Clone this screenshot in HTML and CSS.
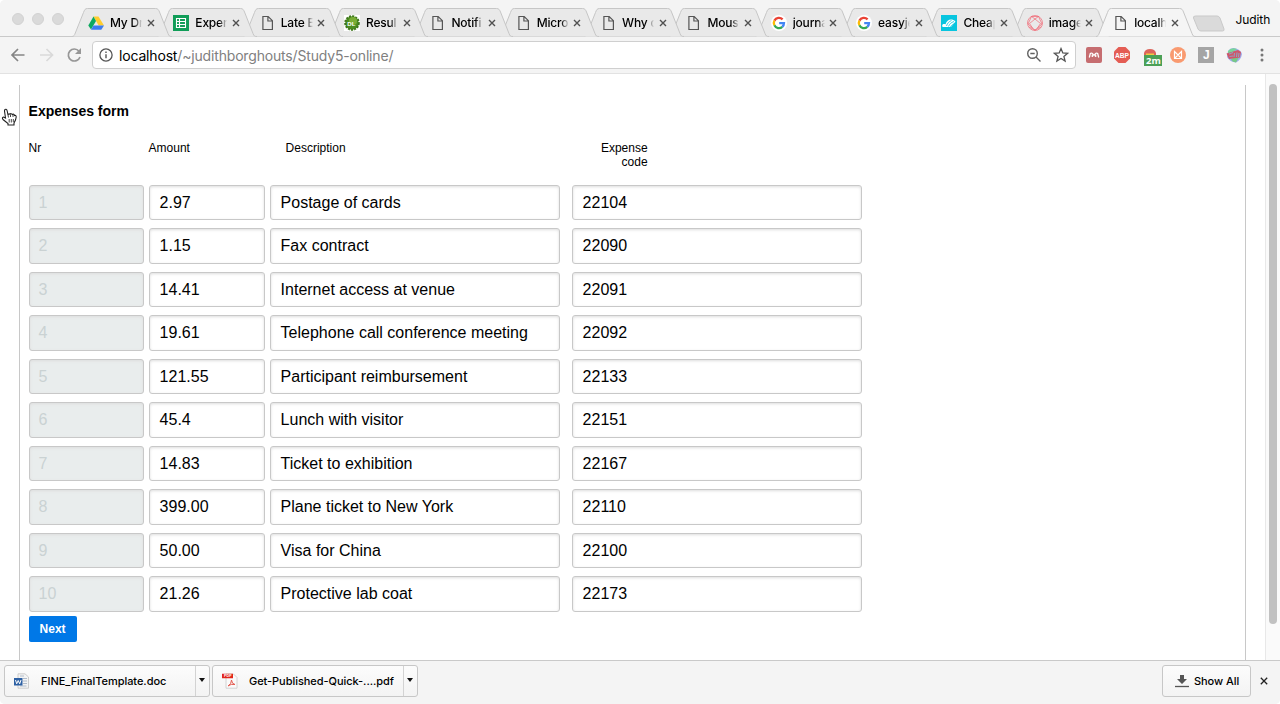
FILE: index.html
```html
<!DOCTYPE html>
<html lang="en">
<head>
<meta charset="utf-8">
<title>Expenses form</title>
<link rel="stylesheet" href="styles.css">
</head>
<body>
<svg class="defs" aria-hidden="true">
  <symbol id="shape" viewBox="0 0 100 29"><path d="M0 28.5C2 28.5 2.500 27 3.300 25L11.500 4.500C12.500 2 13 0.500 15.500 0.500H83.500C86 0.500 86.700 2 87.500 4L96 25.500C97 28 97.500 28.500 100 28.500" stroke="#c6c6c6"/></symbol>
  <symbol id="page" viewBox="0 0 16 16"><path d="M3.900 1.500H9.200L13.400 5.700V14.500H3.900ZM8.900 1.500V6H13.400" fill="none" stroke="#555" stroke-width="1.200"/></symbol>
  <symbol id="x" viewBox="0 0 8 8"><path d="M1 1L7 7M7 1L1 7" stroke="#505050" stroke-width="1.400"/></symbol>
  <symbol id="google" viewBox="0 0 16 16"><circle cx="8" cy="8" r="8" fill="#fff"/><g fill="none" stroke-width="2.300"><path d="M3.400 5.600A5.100 5.100 0 0 1 11.600 4.400" stroke="#ea4335"/><path d="M3.400 5.600A5.100 5.100 0 0 0 3.400 10.300" stroke="#fbbc05"/><path d="M3.400 10.300A5.100 5.100 0 0 0 11.300 11.900" stroke="#34a853"/><path d="M11.300 11.900A5.100 5.100 0 0 0 13 8.100H8.200" stroke="#4285f4"/></g></symbol>
</svg>
<div class="window">
  <header class="tabstrip">
    <div class="lights"><i></i><i></i><i></i></div>
    <nav class="tabs">
      <div class="tab"><svg class="shape"><use href="#shape"/></svg><svg class="fav" viewBox="0 0 16 16"><path d="M5.500 1.500H10.500L16 10.500H10.700Z" fill="#ffcd2e"/><path d="M5.500 1.500L8 6L3 14.500L.3 10.500Z" fill="#0da960"/><path d="M5.500 10.500H16L13.300 14.800H3Z" fill="#3c7cf0"/></svg><span class="name">My Dr</span><svg class="x"><use href="#x"/></svg></div>
      <div class="tab"><svg class="shape"><use href="#shape"/></svg><svg class="fav" viewBox="0 0 16 16"><path d="M0 0H16V16H0Z" fill="#109d58"/><path d="M3.500 3.500H12.500V12.500H3.500ZM3.500 6.500H12.500M3.500 9.500H12.500M6.500 3.500V12.500" fill="none" stroke="#fff" stroke-width="1.100"/></svg><span class="name">Exper</span><svg class="x"><use href="#x"/></svg></div>
      <div class="tab"><svg class="shape"><use href="#shape"/></svg><svg class="fav"><use href="#page"/></svg><span class="name">Late E</span><svg class="x"><use href="#x"/></svg></div>
      <div class="tab"><svg class="shape"><use href="#shape"/></svg><svg class="fav" viewBox="0 0 16 16"><path d="M0 0H16V16H0Z" fill="#fff"/><circle cx="8" cy="8" r="6.800" fill="#4b8c20" stroke="#3e761b" stroke-width="2" stroke-dasharray="2 1.200"/><circle cx="9" cy="6" r="4" fill="#79ad35"/><text x="3.300" y="10.500" class="dl">DL</text></svg><span class="name">Resul</span><svg class="x"><use href="#x"/></svg></div>
      <div class="tab"><svg class="shape"><use href="#shape"/></svg><svg class="fav"><use href="#page"/></svg><span class="name">Notifi</span><svg class="x"><use href="#x"/></svg></div>
      <div class="tab"><svg class="shape"><use href="#shape"/></svg><svg class="fav"><use href="#page"/></svg><span class="name">Micro</span><svg class="x"><use href="#x"/></svg></div>
      <div class="tab"><svg class="shape"><use href="#shape"/></svg><svg class="fav"><use href="#page"/></svg><span class="name">Why d</span><svg class="x"><use href="#x"/></svg></div>
      <div class="tab"><svg class="shape"><use href="#shape"/></svg><svg class="fav"><use href="#page"/></svg><span class="name">Mous</span><svg class="x"><use href="#x"/></svg></div>
      <div class="tab"><svg class="shape"><use href="#shape"/></svg><svg class="fav"><use href="#google"/></svg><span class="name">journa</span><svg class="x"><use href="#x"/></svg></div>
      <div class="tab"><svg class="shape"><use href="#shape"/></svg><svg class="fav"><use href="#google"/></svg><span class="name">easyje</span><svg class="x"><use href="#x"/></svg></div>
      <div class="tab"><svg class="shape"><use href="#shape"/></svg><svg class="fav" viewBox="0 0 16 16"><path d="M0 0H16V16H0Z" fill="#08c5df"/><path d="M1.200 10.500C1.200 9 3 8.600 4.500 9.300C6 4 11 3.300 14.500 6.500L10 12H2.500C1.500 12 1.200 11.500 1.200 10.500Z" fill="#fff"/><path d="M5.500 11C6.500 8 8 6.500 10.500 5.500M7.500 11.500C8.500 9 10 7.500 13 6.500M9.500 12C10.500 10 12 9 14.500 8.500" fill="none" stroke="#08c5df" stroke-width=".8"/></svg><span class="name">Cheap</span><svg class="x"><use href="#x"/></svg></div>
      <div class="tab"><svg class="shape"><use href="#shape"/></svg><svg class="fav" viewBox="0 0 16 16"><g fill="none" stroke="#f06672" stroke-width=".7"><circle cx="8" cy="8" r="7.500"/><path d="M4.500 1.500H11.500L15 9L8 15.300L1 9ZM4.500 1.500L8 4L11.500 1.500M8 4L2.500 8.500L5.500 13M8 4L13.500 8.500L10.500 13M2 12L8 15L14 12"/></g></svg><span class="name">image</span><svg class="x"><use href="#x"/></svg></div>
      <div class="tab active"><svg class="shape"><use href="#shape"/></svg><svg class="fav"><use href="#page"/></svg><span class="name">localh</span><svg class="x"><use href="#x"/></svg></div>
    </nav>
    <svg class="newtab" viewBox="0 0 34 18"><path d="M3.500 1H25Q27 1 28 3L32 14Q32.500 16 30.500 16H9Q7 16 6 14L1.500 3Q1 1 3.500 1Z" fill="#dadada" stroke="#c9c9c9"/></svg>
    <span class="user">Judith</span>
  </header>
  <div class="toolbar">
    <svg class="nav" viewBox="0 0 84 34"><g fill="none" stroke-width="1.700"><path d="M24.500 13H12.500M18 7L12 13L18 19" stroke="#858585"/><path d="M40 13H52M46.500 7L52.500 13L46.500 19" stroke="#d9d9d9"/><path d="M79 9.200A6 6 0 1 0 80 15" stroke="#979797"/></g><path d="M81 6V12H75Z" fill="#979797"/></svg>
    <div class="omnibox">
      <svg class="info" viewBox="0 0 14 14"><circle cx="7" cy="7" r="6.100" fill="none" stroke="#555" stroke-width="1.300"/><path d="M7 6.200V10.300M7 3.500V5" stroke="#555" stroke-width="1.400"/></svg>
      <span class="url">localhost<span class="path">/~judithborghouts/Study5-online/</span></span>
      <svg class="mag" viewBox="0 0 16 16"><g fill="none" stroke="#616161" stroke-width="1.400"><circle cx="6.500" cy="6.500" r="4.800"/><path d="M10 10L14.500 14.500M4.300 6.500H8.700"/></g></svg>
      <svg class="star" viewBox="0 0 16 16"><path d="M8 1.600L9.800 6L14.600 6.300L10.900 9.400L12.100 14L8 11.500L3.900 14L5.100 9.400L1.400 6.300L6.200 6Z" fill="none" stroke="#555" stroke-width="1.300"/></svg>
    </div>
    <div class="exts">
      <svg viewBox="0 0 18 18"><rect x="1" y="1" width="16" height="16" rx="2" fill="#c66d70"/><path d="M4.300 11.500L5.300 7.500Q7 6 9 9.500Q11 6 12.700 7.500L13.700 11.500M7.300 8.500V11M10.700 8.500V11" fill="none" stroke="#fff" stroke-width="1.300"/></svg>
      <svg viewBox="0 0 18 18"><path d="M5.500 1H12.500L17 5.500V12.500L12.500 17H5.500L1 12.500V5.500Z" fill="#e45d54"/><text x="2" y="12" textLength="14" lengthAdjust="spacingAndGlyphs" class="abp">ABP</text></svg>
      <svg class="timer" viewBox="0 0 20 20"><path d="M1 6Q2 2 7 2T13 6V8H1Z" fill="#dc655c"/><path d="M3 6.500H11V8H3Z" fill="#f1ca42"/><rect x="1" y="8" width="18" height="11" fill="#4ba056"/><text x="3" y="17.300" class="min">2m</text></svg>
      <svg viewBox="0 0 18 18"><circle cx="9" cy="9" r="8" fill="#f99a70"/><path d="M5.500 5.500L9 9L12.500 5.500V12.500H5.500ZM5.500 12.500L9 9L12.500 12.500" fill="none" stroke="#fff" stroke-width="1.200"/></svg>
      <svg viewBox="0 0 18 18"><path d="M1 1H17V17H1Z" fill="#a5a5a5"/><text x="6" y="13.300" class="jj">J</text></svg>
      <svg viewBox="0 0 18 18"><path d="M3 5Q6 1 11 2.500T17 8Q16 14 11 16.500Q5 16 2 11Z" fill="#9cabee"/><path d="M3 5Q6 1 12 3L8 6L3 8Z" fill="#78d59a"/><path d="M8 12L14 11L11 16.500Q7 16 6 13Z" fill="#77c987"/><path d="M1.500 7.500L13 4L16 6L15 11.500L4 13Z" fill="#cf5668"/><path d="M4 8L8 6.500M4.500 10.500L8 10M9.500 7L9 11M12 6.500L11.500 11M14 7L13.500 11" stroke="#92a0bf" stroke-width="1.100"/></svg>
      <svg viewBox="0 0 18 18"><g fill="#777"><circle cx="9" cy="4" r="1.500"/><circle cx="9" cy="9" r="1.500"/><circle cx="9" cy="14" r="1.500"/></g></svg>
    </div>
  </div>
  <div class="viewport">
    <svg class="hand" viewBox="0 0 17 18"><path d="M4.500 10L3.500 3Q3.500 1 5 1.200Q6 1.500 6.200 3L7 7Q7.500 5.200 9 6.200Q10 5 11.300 6.500Q12.800 5.500 13.500 7.500Q15.200 7 15.200 9L14.500 12L13 15V17H7V15.500L2 11.500Q.6 9.500 2.500 9Z" fill="#fff" stroke="#222" stroke-width="1.100"/><path d="M7 7L7.500 9.500M9.500 6.500V9M12 7V9M8.200 11V14.500M10.300 11V14.500M12.300 11V14" stroke="#333" stroke-width=".9"/></svg>
    <main class="sheet">
      <h1>Expenses form</h1>
      <div class="row head"><span>Nr</span><span>Amount</span><span class="desc">Description</span><span class="code">Expense<br>code</span></div>
      <div class="rows">
        <div class="row"><div class="field nr">1</div><div class="field">2.97</div><div class="field">Postage of cards</div><div class="field last">22104</div></div>
        <div class="row"><div class="field nr">2</div><div class="field">1.15</div><div class="field">Fax contract</div><div class="field last">22090</div></div>
        <div class="row"><div class="field nr">3</div><div class="field">14.41</div><div class="field">Internet access at venue</div><div class="field last">22091</div></div>
        <div class="row"><div class="field nr">4</div><div class="field">19.61</div><div class="field">Telephone call conference meeting</div><div class="field last">22092</div></div>
        <div class="row"><div class="field nr">5</div><div class="field">121.55</div><div class="field">Participant reimbursement</div><div class="field last">22133</div></div>
        <div class="row"><div class="field nr">6</div><div class="field">45.4</div><div class="field">Lunch with visitor</div><div class="field last">22151</div></div>
        <div class="row"><div class="field nr">7</div><div class="field">14.83</div><div class="field">Ticket to exhibition</div><div class="field last">22167</div></div>
        <div class="row"><div class="field nr">8</div><div class="field">399.00</div><div class="field">Plane ticket to New York</div><div class="field last">22110</div></div>
        <div class="row"><div class="field nr">9</div><div class="field">50.00</div><div class="field">Visa for China</div><div class="field last">22100</div></div>
        <div class="row"><div class="field nr">10</div><div class="field">21.26</div><div class="field">Protective lab coat</div><div class="field last">22173</div></div>
      </div>
      <button class="next">Next</button>
    </main>
    <div class="scroll"><div class="thumb"></div></div>
  </div>
  <footer class="shelf">
    <div class="item"><svg class="file" viewBox="0 0 16 16"><path d="M4 .8H11L14.500 4V15.200H4Z" fill="#f4f4f4" stroke="#c3c3c3" stroke-width=".8"/><path d="M6 3H10M9 5.500H13M9 8H13M9 10.500H13M6 13H12.500" stroke="#a9b5c5" stroke-width=".9"/><rect x="0" y="5" width="8.500" height="7.500" fill="#2e61a4"/><path d="M1.500 7L2.700 10.800L4.200 7.500L5.700 10.800L7 7" fill="none" stroke="#fff"/></svg><span class="fname">FINE_FinalTemplate.doc</span><span class="drop"><i></i></span></div>
    <div class="item"><svg class="file" viewBox="0 0 16 16"><path d="M4 1H11.500L15 4.500V15.200H4Z" fill="#fafafa" stroke="#c9c9c9" stroke-width=".8"/><path d="M0 .8H11V5.200H0Z" fill="#e1251b"/><text x="2" y="4.400" class="pdftag">PDF</text><path d="M6 13Q9.500 11 9.500 7Q9.800 11 13 11.500Q9 10.500 6 13" fill="none" stroke="#e45c52"/></svg><span class="fname">Get-Published-Quick-....pdf</span><span class="drop"><i></i></span></div>
    <div class="showall"><svg viewBox="0 0 14 14"><path d="M5 1H9V5H12L7 10L2 5H5Z" fill="#555"/><path d="M0 12.500H14" stroke="#555" stroke-width="1.300"/></svg><span>Show All</span></div>
    <svg class="close" viewBox="0 0 8 8"><path d="M.8 .8L7.200 7.200M7.200 .8L.8 7.200" stroke="#222" stroke-width="1.300"/></svg>
  </footer>
</div>
</body>
</html>
```
FILE: styles.css
```css
* { box-sizing: border-box; }
body { margin: 0; background: #fff; font-family: Inter, sans-serif; color: #000; overflow: hidden; }
svg { display: block; flex: none; }
.defs { position: absolute; width: 0; height: 0; }
.window { width: 1280px; height: 704px; display: flex; flex-direction: column; border-radius: 5px; overflow: hidden; background: #f4f4f4; }

.tabstrip { height: 37px; display: flex; flex: none; padding-top: 8px; box-shadow: inset 0 -1px #c9c9c9; background: #f4f4f4; }
.lights { width: 72px; padding: 5px 0 0 12px; display: flex; gap: 8px; flex: none; }
.lights i { width: 12px; height: 12px; border-radius: 50%; background: #dadada; border: 1px solid #d2d2d2; }
.tabs { display: flex; flex: none; width: 1121px; isolation: isolate; }
.tab { position: relative; width: 85.35px; height: 29px; flex: none; display: flex; align-items: center; padding: 1px 0 0 16px; }
.tab .shape { position: absolute; left: 0; top: 0; width: 100px; height: 29px; fill: #e9e9e9; }
.tab.active .shape { fill: #f5f5f5; }
.tab:nth-child(1) { z-index: 12; } .tab:nth-child(2) { z-index: 11; } .tab:nth-child(3) { z-index: 10; }
.tab:nth-child(4) { z-index: 9; } .tab:nth-child(5) { z-index: 8; } .tab:nth-child(6) { z-index: 7; }
.tab:nth-child(7) { z-index: 6; } .tab:nth-child(8) { z-index: 5; } .tab:nth-child(9) { z-index: 4; }
.tab:nth-child(10) { z-index: 3; } .tab:nth-child(11) { z-index: 2; } .tab:nth-child(12) { z-index: 1; }
.tab.active { z-index: 20; }
.fav { position: relative; width: 16px; height: 16px; }
.name { position: relative; width: 32px; margin-left: 6px; white-space: nowrap; font-size: 12px; letter-spacing: -.2px; line-height: 16px; font-weight: 500; -webkit-mask-image: linear-gradient(90deg, #000 76%, transparent); mask-image: linear-gradient(90deg, #000 76%, transparent); }
.tab .x { position: relative; width: 8px; height: 8px; margin-left: 4.500px; margin-right: -10px; }
.dl { font: 700 6px "Liberation Sans", sans-serif; fill: #fff; }
.newtab { width: 34px; height: 18px; margin: 7px 0 0 -1px; }
.user { font-size: 12px; line-height: 15px; margin: 4px 0 0 9.500px; white-space: nowrap; letter-spacing: -.1px; }

.toolbar { height: 37px; flex: none; display: flex; padding: 5px 0 0; border-bottom: 1px solid #e2e2e2; background: #f4f4f4; }
.nav { width: 84px; height: 34px; }
.omnibox { width: 984px; height: 28px; margin: -1px 0 0 8px; flex: none; display: flex; align-items: center; background: #fff; border: 1px solid #cfcfcf; border-radius: 4px; padding: 0 6px; }
.info { width: 14px; height: 14px; }
.url { margin-left: 6px; padding-top: 1px; flex: 1; font-size: 14px; letter-spacing: -.17px; white-space: nowrap; }
.path { color: #808080; }
.mag { width: 16px; height: 16px; margin-right: 11px; }
.star { width: 16px; height: 16px; }
.exts { display: flex; padding: 4px 0 0 9px; gap: 10px; }
.exts svg { width: 18px; height: 18px; }
.exts .timer { width: 20px; height: 20px; margin: 1px -4px 0 2px; }
.abp { font: 700 8px "Liberation Sans", sans-serif; fill: #fff; }
.min { font: 700 9.500px "Open Sans", sans-serif; fill: #fff; }
.jj { font: 700 12px "Liberation Sans", sans-serif; fill: #fff; }

.viewport { position: relative; height: 586px; flex: none; display: flex; background: #fff; }
.hand { position: absolute; left: 1px; top: 34px; width: 17px; height: 18px; }
.sheet { width: 1227px; margin: 11px 19px 0; padding: 17px 0 0 8.600px; flex: none; border: solid #c8c8c8; border-width: 0 1px; font-family: "Liberation Sans", sans-serif; }
h1 { margin: 0; font-size: 14px; line-height: 18px; }
.row { display: grid; grid-template-columns: 115px 116px 290px 290px; column-gap: 5px; }
.head { height: 43.900px; margin-top: 21px; font-size: 12px; line-height: 14px; }
.head .desc { padding-left: 16px; }
.head .code { width: 83px; text-align: right; }
.rows { display: grid; gap: 8px; }
.field { height: 35.500px; border: 1px solid #c8c8c8; border-radius: 3px; box-shadow: inset 0 1px 3px #ddd; padding: 0 10px; font-size: 16px; line-height: 33px; background: #fff; white-space: nowrap; }
.field.nr { background: #e9eded; color: #cad2d3; padding-left: 9px; }
.field.last { margin-left: 7px; margin-right: -7px; }
.next { display: block; margin-top: 4px; width: 48px; height: 26px; padding: 0; border: 0; border-radius: 2px; background: #0078e7; color: #fff; font: 700 12px/26px "Liberation Sans", sans-serif; }
.scroll { width: 15px; background: #fafafa; border-left: 1px solid #e8e8e8; padding: 10px 0 0 3px; }
.thumb { width: 8px; height: 540px; border-radius: 4px; background: #c1c1c1; }

.shelf { flex: 1; display: flex; padding: 4px 11px 0 4px; border-top: 1px solid #c9c9c9; background: #f4f4f4; gap: 2px; font-size: 11px; font-weight: 500; letter-spacing: -.05px; }
.item, .showall { height: 32px; display: flex; align-items: center; border: 1px solid #c7c7c7; border-radius: 3px; background: linear-gradient(#fcfcfc, #f3f3f3); }
.item { width: 206px; padding-left: 9px; }
.file { width: 16px; height: 16px; }
.fname { flex: 1; margin-left: 11px; white-space: nowrap; }
.drop { align-self: stretch; width: 14px; border-left: 1px solid #d3d3d3; padding: 12px 0 0 3px; }
.drop i { display: block; width: 0; height: 0; border: solid transparent; border-width: 4px 3px 0; border-top-color: #111; }
.showall { width: 89px; margin-left: auto; padding-left: 12px; gap: 5px; white-space: nowrap; }
.showall svg { width: 14px; height: 14px; }
.pdftag { font: 700 3.800px "Liberation Sans", sans-serif; fill: #fff; }
.close { width: 8px; height: 8px; margin: 12px 1px 0 7px; }
```
